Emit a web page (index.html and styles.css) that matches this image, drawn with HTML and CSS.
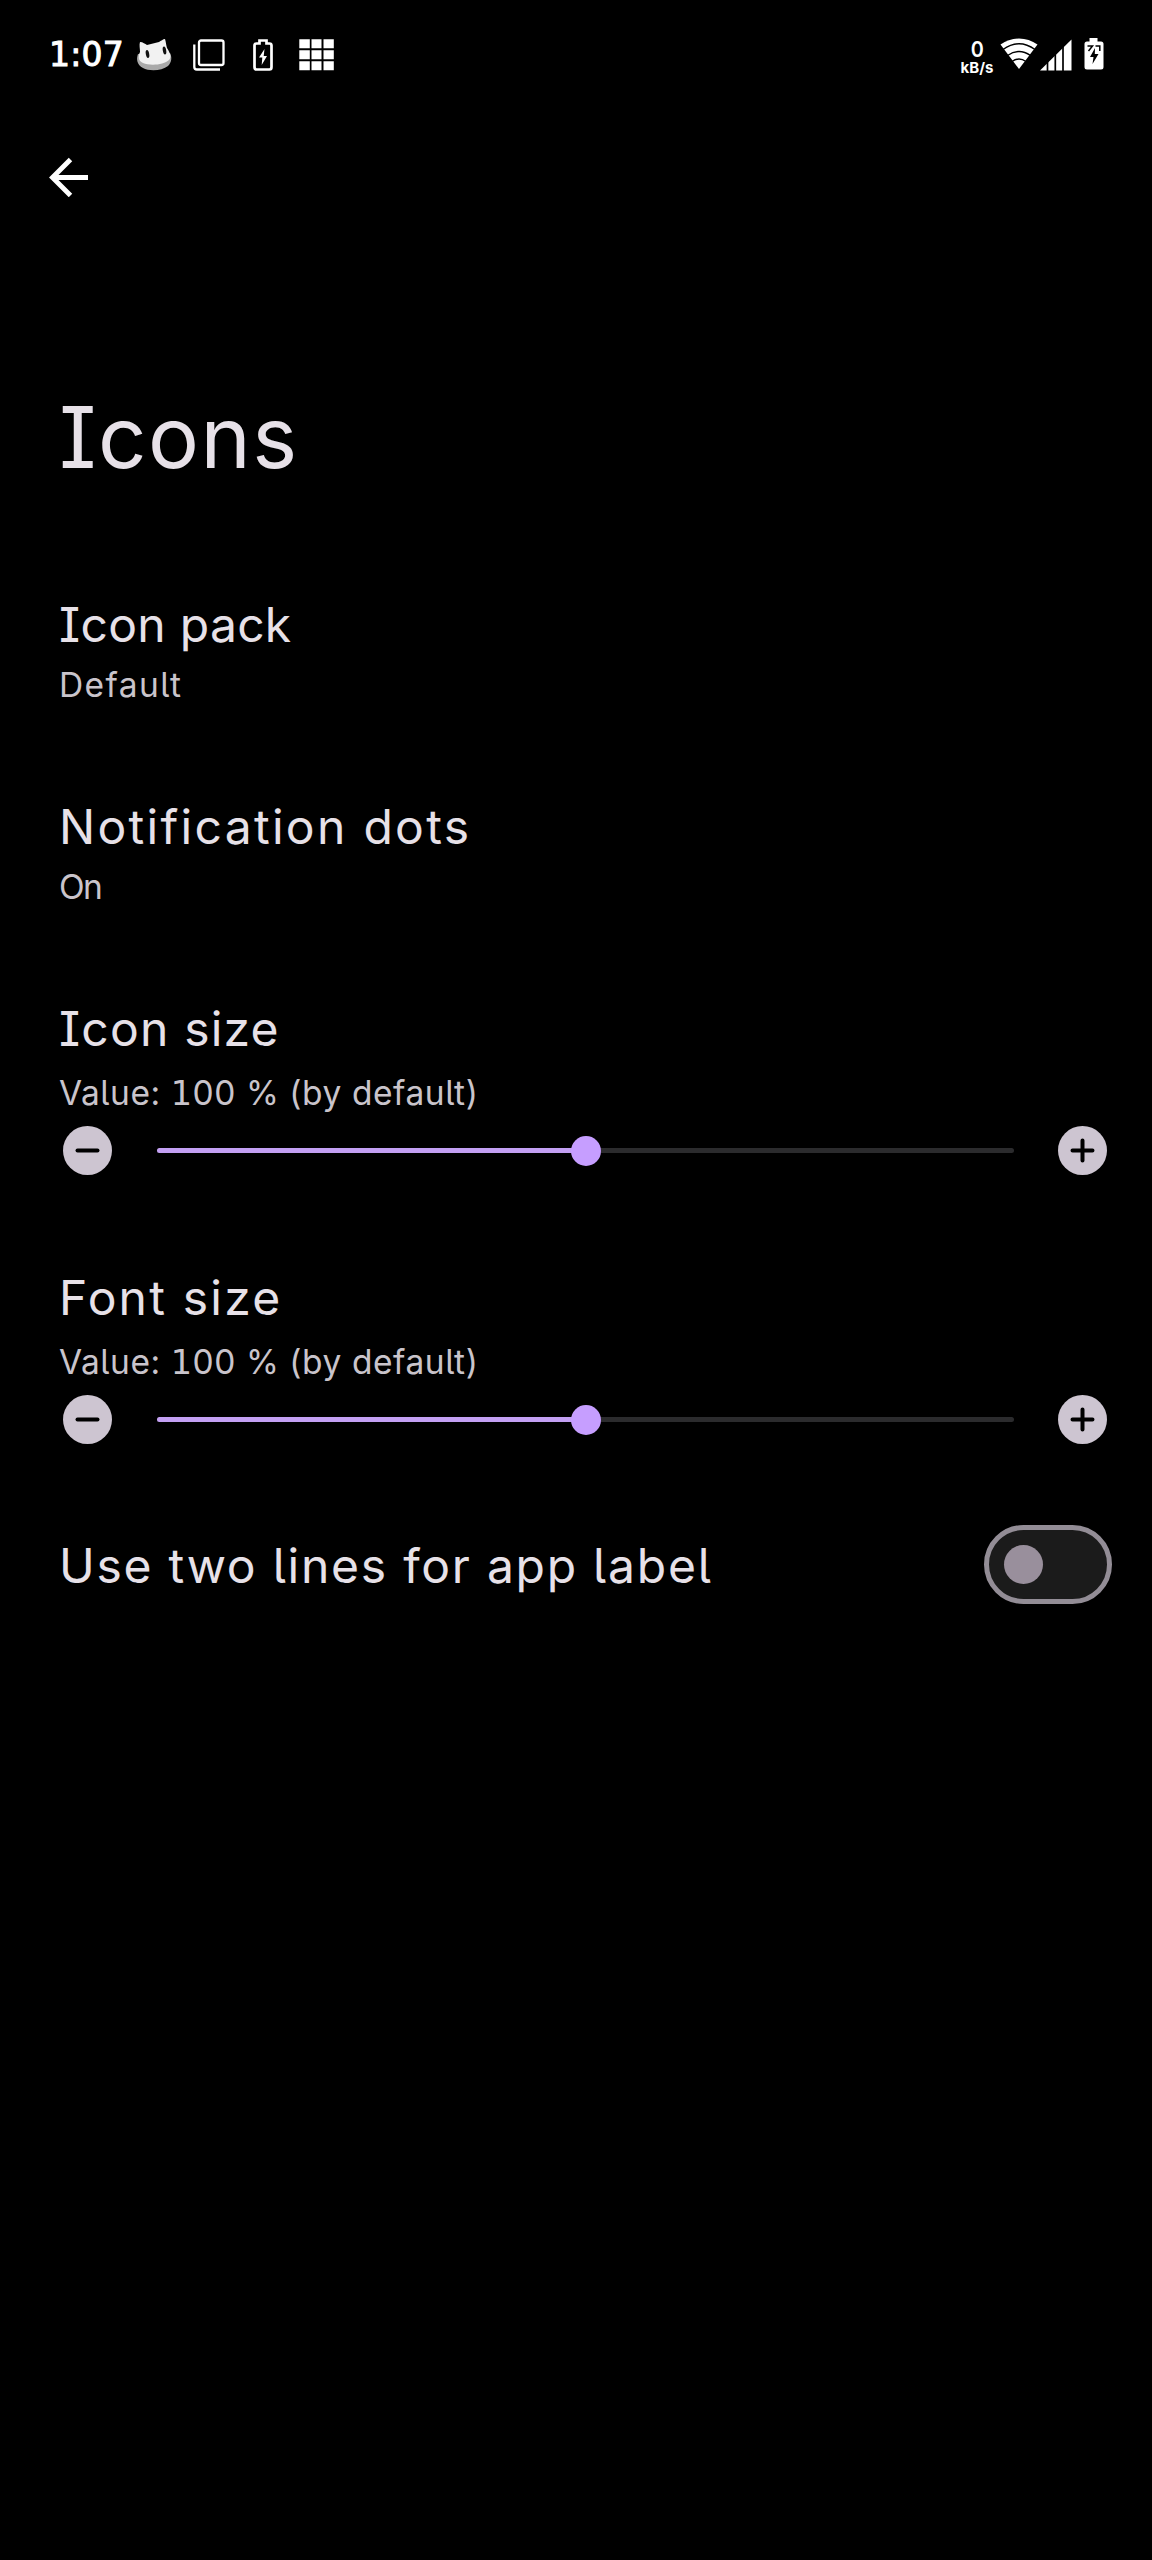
FILE: index.html
```html
<!DOCTYPE html>
<html lang="en">
<head>
<meta charset="utf-8">
<title>Icons</title>
<link rel="stylesheet" href="styles.css">
</head>
<body>
<header class="status">
  <span class="clock">1:07</span>
  <svg class="cat" width="38" height="34" viewBox="0 0 38 34"><path d="M2 16C0 21 1 27 7 30c6 3.500 19 3 25-2 4-4 4-9 2-13z" fill="#aaa"/><path d="M4 4c3 0 5 2 7 3 4-1 8-2 12-3 2-1 4-3 6-3 1 3 1 6 2 9 3 5 5 9 2 12-5 5-19 6-26 3C2 23 2 18 4 14c0-4-1-7 0-10z" fill="#f2f2f2"/><ellipse cx="11.500" cy="16" rx="1.700" ry="4" transform="rotate(-10 11.500 16)" fill="#111"/><ellipse cx="28.500" cy="12.500" rx="1.700" ry="4" transform="rotate(-10 28.500 12.500)" fill="#111"/></svg>
  <svg class="layers" width="32" height="32" viewBox="0 0 32 32" fill="none" stroke="#fff" stroke-width="2.300"><rect x="6" y="1.500" width="24.500" height="24.500" rx="2"/><path d="M1.300 5.500V28q0 2.500 2.500 2.500H27"/></svg>
  <svg class="saver" width="22" height="34" viewBox="0 0 22 34"><path d="M4.500 5.500h3v-3h7v3h3q2 0 2 2V29q0 2.500-2 2.500h-13q-2 0-2-2.500V7.500q0-2 2-2z" fill="none" stroke="#fff" stroke-width="2.700"/><path d="M12.500 11 7 19.500h3.300L9.700 27 15 18h-3.300z" fill="#fff"/></svg>
  <svg class="apps" width="36" height="32" viewBox="0 0 36 32" fill="#fff"><path d="M.3.300h10.500v9H.3zM12.500.300h10v9h-10zM24.500.300h10.300v9H24.500zM.3 11.300h10.500v9H.3zM12.500 11.300h10v9h-10zM24.500 11.300h10.300v9H24.500zM.3 22.300h10.500v9H.3zM12.500 22.300h10v9h-10zM24.500 22.300h10.300v9H24.500z"/></svg>
  <span class="net"><b class="rate">0</b><b class="unit">kB/s</b></span>
  <svg class="wifi" width="38" height="32" viewBox="0 0 38 32"><path d="M19 31 .5 6.500Q9 .500 19 .500t18.500 6z" fill="#fff"/><path d="M3 11.500q16-11.500 32 0M7.500 17.500q11.500-8 23 0M12 23.500q7-5 14 0" fill="none" stroke="#000" stroke-width="1.500"/></svg>
  <svg class="signal" width="32" height="32" viewBox="0 0 32 32"><path d="M0 31.500 31.500.500v31z" fill="#fff"/><path d="M7.500 0v32M15.300 0v32M23 0v32" stroke="#000" stroke-width="1.700"/></svg>
  <svg class="battery" width="20" height="32" viewBox="0 0 20 32"><path d="M5.500 0h8v3.500H17q2.500 0 2.500 2.500v23q0 2.500-2.500 2.500H3Q.5 31.500.500 29V6Q.5 3.500 3 3.500h2.500z" fill="#fff"/><path d="M11 10 6 19h3.500l-1 7 6-10h-3.700z" fill="#000"/><path d="M3.500 8h5L4.500 13M11.500 8h4.300v5" fill="none" stroke="#000" stroke-width="1.500"/></svg>
</header>
<nav class="bar"><svg width="40" height="40" viewBox="0 0 40 40" fill="none" stroke="#fff" stroke-width="4.900"><path d="M39 20.500H4M21.500 2.500 3.500 20.500l18 18"/></svg></nav>
<main>
  <h1>Icons</h1>
  <section class="item">
    <h2 class="pack">Icon pack</h2>
    <p class="default">Default</p>
  </section>
  <section class="item">
    <h2 class="dots">Notification dots</h2>
    <p class="on">On</p>
  </section>
  <section class="item seek">
    <h2 class="icon-size">Icon size</h2>
    <p class="value">Value: <span class="one">1</span>00 % (by default)</p>
    <div class="control">
      <svg class="button" viewBox="0 0 49 49"><circle cx="24.500" cy="24.500" r="24.500"/><path d="M14.500 24.500h20"/></svg>
      <div class="track"><div class="fill"><i class="thumb"></i></div></div>
      <svg class="button" viewBox="0 0 49 49"><circle cx="24.500" cy="24.500" r="24.500"/><path d="M14.500 24.500h20M24.500 14.500v20"/></svg>
    </div>
  </section>
  <section class="item seek">
    <h2 class="font-size">Font size</h2>
    <p class="value">Value: <span class="one">1</span>00 % (by default)</p>
    <div class="control">
      <svg class="button" viewBox="0 0 49 49"><circle cx="24.500" cy="24.500" r="24.500"/><path d="M14.500 24.500h20"/></svg>
      <div class="track"><div class="fill"><i class="thumb"></i></div></div>
      <svg class="button" viewBox="0 0 49 49"><circle cx="24.500" cy="24.500" r="24.500"/><path d="M14.500 24.500h20M24.500 14.500v20"/></svg>
    </div>
  </section>
  <section class="toggle">
    <h2 class="lines">Use two lines for app label</h2>
    <span class="switch"><i class="knob"></i></span>
  </section>
</main>
</body>
</html>
```
FILE: styles.css
```css
* { box-sizing: border-box; }
body {
  margin: 0;
  min-height: 2560px;
  background: #000;
  color: #e7e1e8;
  font-family: Inter, "Noto Sans", sans-serif;
  font-feature-settings: "cv08", "cv05", "calt" 0;
}
h1, h2, p { margin: 0; font-weight: 430; white-space: nowrap; }
svg { display: block; flex: none; }

.status { display: flex; align-items: flex-start; height: 110px; padding: 38px 48px 0 49px; color: #fff; }
.clock { width: 87px; padding-top: 1px; font: 400 33px/32px "DejaVu Sans", sans-serif; letter-spacing: 0.2px; -webkit-text-stroke: 1px #fff; }
.layers { margin: 1px 0 0 19px; }
.saver { margin-left: 27px; }
.apps { margin: 1px 0 0 25px; }
.net { display: flex; flex-direction: column; align-items: center; width: 36px; margin-left: auto; }
.rate { font-size: 22px; line-height: 22px; font-weight: 600; transform: scaleX(0.9); }
.unit { font-size: 15px; line-height: 15px; font-weight: 700; }
.wifi { margin-left: 5px; }
.signal { margin: 1px 0 0 2px; }
.battery { margin-left: 12px; }

.bar { height: 278px; padding: 47px 0 0 49px; }
main { padding: 0 40px 0 59px; }
h1 { height: 207px; font-size: 85px; line-height: 100px; letter-spacing: 1.500px; }
h2 { font-size: 48px; line-height: 60px; }
p { margin-top: 11px; font-size: 33.500px; line-height: 39px; color: #c9c4cb; }
.item { height: 202px; }
.seek { height: 269px; }
.seek p { margin-top: 15px; }
.pack { letter-spacing: 0.300px; }
.default { letter-spacing: 1.400px; }
.dots { letter-spacing: 2.300px; }
.on { letter-spacing: -1.500px; }
.icon-size { letter-spacing: 1.200px; }
.font-size { letter-spacing: 2.200px; }
.value { letter-spacing: 0.550px; }
.lines { padding-top: 3px; letter-spacing: 1.750px; }
.one { font-family: "DejaVu Sans", sans-serif; line-height: 1; }

.control { display: flex; align-items: center; height: 49px; margin-top: 13px; padding: 0 5px 0 4px; }
.button { width: 49px; height: 49px; fill: #cdc5d1; stroke: #000; stroke-width: 4; stroke-linecap: round; }
.button circle { stroke: none; }
.track { flex: 1; height: 5px; margin: 0 44px 0 45px; border-radius: 3px; background: #2b2b2d; }
.fill { position: relative; width: 50%; height: 5px; border-radius: 3px; background: #c3a0f3; }
.thumb { position: absolute; right: -15px; top: -12.500px; width: 30px; height: 30px; border-radius: 50%; background: #c69eff; }

.toggle { display: flex; align-items: center; justify-content: space-between; height: 79px; margin-top: -12px; }
.switch { display: flex; align-items: center; width: 128px; height: 79px; padding-left: 15px; border: 5px solid #938d96; border-radius: 40px; background: #1b1b1b; }
.knob { width: 39px; height: 39px; border-radius: 50%; background: #998f9c; }
```
